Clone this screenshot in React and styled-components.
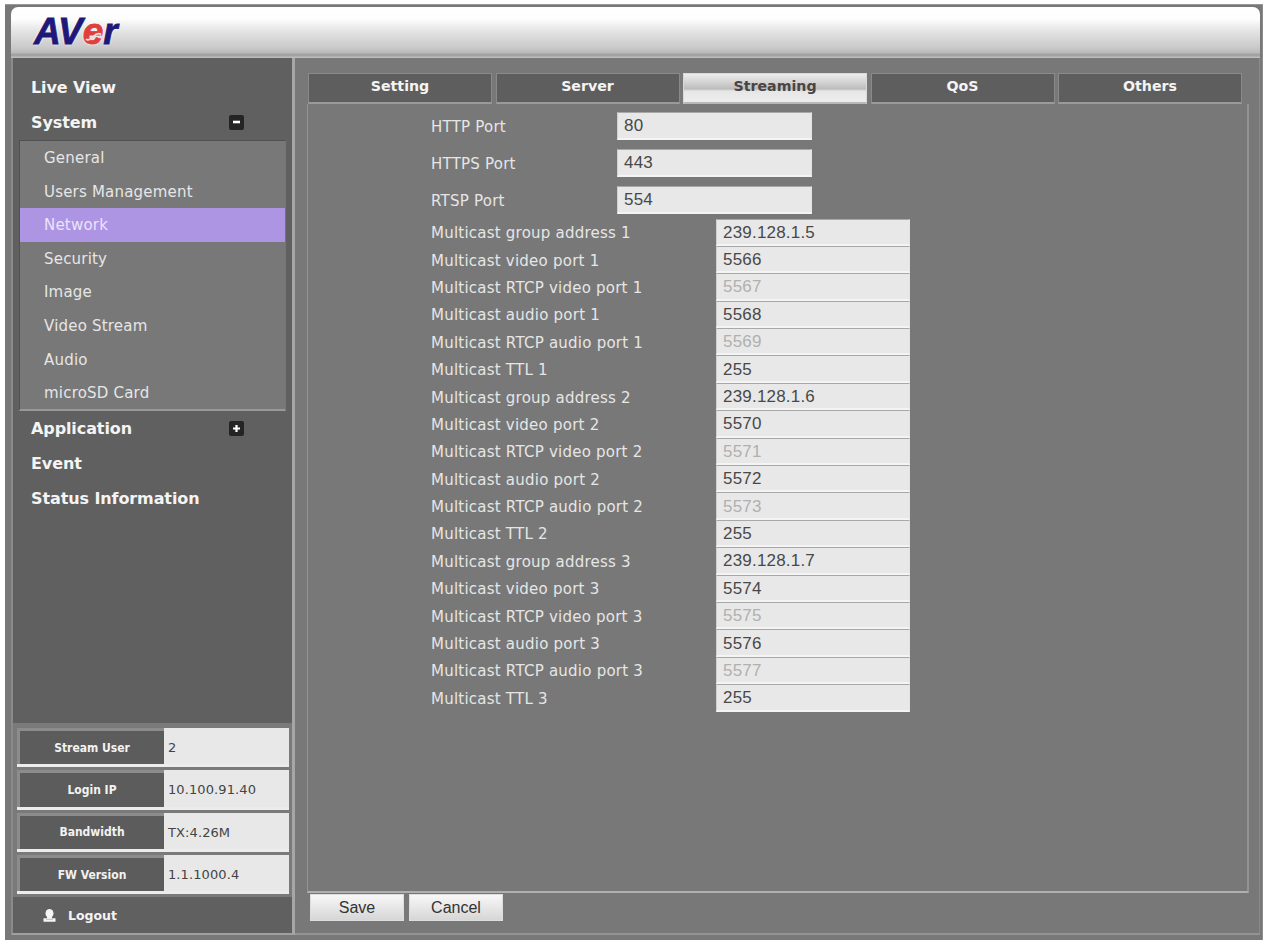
import React, { useState } from 'react';
import styled, { createGlobalStyle } from 'styled-components';

const tabs = ['Setting', 'Server', 'Streaming', 'QoS', 'Others'];

const systemItems = [
   'General',
   'Users Management',
   'Network',
   'Security',
   'Image',
   'Video Stream',
   'Audio',
   'microSD Card',
];

const ports = [
   { label: 'HTTP Port', value: '80' },
   { label: 'HTTPS Port', value: '443' },
   { label: 'RTSP Port', value: '554' },
];

const multicast = [
   { label: 'Multicast group address 1', value: '239.128.1.5' },
   { label: 'Multicast video port 1', value: '5566' },
   { label: 'Multicast RTCP video port 1', value: '5567', disabled: true },
   { label: 'Multicast audio port 1', value: '5568' },
   { label: 'Multicast RTCP audio port 1', value: '5569', disabled: true },
   { label: 'Multicast TTL 1', value: '255' },
   { label: 'Multicast group address 2', value: '239.128.1.6' },
   { label: 'Multicast video port 2', value: '5570' },
   { label: 'Multicast RTCP video port 2', value: '5571', disabled: true },
   { label: 'Multicast audio port 2', value: '5572' },
   { label: 'Multicast RTCP audio port 2', value: '5573', disabled: true },
   { label: 'Multicast TTL 2', value: '255' },
   { label: 'Multicast group address 3', value: '239.128.1.7' },
   { label: 'Multicast video port 3', value: '5574' },
   { label: 'Multicast RTCP video port 3', value: '5575', disabled: true },
   { label: 'Multicast audio port 3', value: '5576' },
   { label: 'Multicast RTCP audio port 3', value: '5577', disabled: true },
   { label: 'Multicast TTL 3', value: '255' },
];

const info = [
   { label: 'Stream User', value: '2' },
   { label: 'Login IP', value: '10.100.91.40' },
   { label: 'Bandwidth', value: 'TX:4.26M' },
   { label: 'FW Version', value: '1.1.1000.4' },
];

const Logo = () => (
   <LogoText>
      AV
      <em>
         e
         <Swoosh viewBox="0 0 22 22">
            <path d="M3 15c4 2 6-1 8-3s5-4 8-2" fill="none" stroke="#f7dcdc" strokeWidth="1.8" />
         </Swoosh>
      </em>
      r
   </LogoText>
);

const App = () => {
   const [tab, setTab] = useState('Streaming');
   const [page, setPage] = useState('Network');

   return (
      <>
         <GlobalStyle />
         <Frame>
            <Header>
               <Logo />
            </Header>
            <Main>
               <Sidebar>
                  <Nav>
                     <NavHeading>Live View</NavHeading>
                     <NavHeading>
                        System
                        <Toggle viewBox="0 0 15 15">
                           <rect width="15" height="15" rx="2" fill="#242424" />
                           <path d="M4 7h7" stroke="#fff" strokeWidth="2.6" />
                        </Toggle>
                     </NavHeading>
                     <SubMenu>
                        {systemItems.map((item) => (
                           <SubItem key={item} $active={item === page} onClick={() => setPage(item)}>
                              {item}
                           </SubItem>
                        ))}
                     </SubMenu>
                     <NavHeading>
                        Application
                        <Toggle viewBox="0 0 15 15">
                           <rect width="15" height="15" rx="2" fill="#242424" />
                           <path d="M4 7.5h7M7.5 4v7" stroke="#fff" strokeWidth="2.2" />
                        </Toggle>
                     </NavHeading>
                     <NavHeading>Event</NavHeading>
                     <NavHeading>Status Information</NavHeading>
                  </Nav>
                  <InfoList>
                     {info.map((row) => (
                        <InfoRow key={row.label}>
                           <InfoLabel>{row.label}</InfoLabel>
                           <InfoValue>{row.value}</InfoValue>
                        </InfoRow>
                     ))}
                  </InfoList>
                  <Logout>
                     <svg width="13" height="13" viewBox="0 0 13 13" fill="#f4f4f4">
                        <ellipse cx="6.5" cy="4.4" rx="4" ry="4.3" />
                        <path d="M4 7.5h5v1.8h3.5v3.5H.5V9.3H4z" />
                        <path d="M3 10.3h7" stroke="#aaa" strokeWidth=".7" />
                     </svg>
                     Logout
                  </Logout>
               </Sidebar>

               <Content>
                  <Tabs>
                     {tabs.map((name) => (
                        <Tab key={name} $active={name === tab} onClick={() => setTab(name)}>
                           {name}
                        </Tab>
                     ))}
                  </Tabs>
                  <Panel>
                     <PortList>
                        {ports.map((field) => (
                           <PortRow key={field.label}>
                              <FieldLabel>{field.label}</FieldLabel>
                              <Input defaultValue={field.value} />
                           </PortRow>
                        ))}
                     </PortList>
                     {multicast.map((field) => (
                        <MulticastRow key={field.label}>
                           <FieldLabel>{field.label}</FieldLabel>
                           <Input defaultValue={field.value} disabled={field.disabled} />
                        </MulticastRow>
                     ))}
                  </Panel>
                  <Actions>
                     <Button>Save</Button>
                     <Button>Cancel</Button>
                  </Actions>
               </Content>
            </Main>
         </Frame>
      </>
   );
};

const GlobalStyle = createGlobalStyle`
   * {
      box-sizing: border-box;
   }

   body {
      margin: 0;
      background: #fff;
      font-family: 'DejaVu Sans', Verdana, sans-serif;
      overflow: hidden;
   }
`;

const Frame = styled.div`
   display: flex;
   flex-direction: column;
   width: 1258px;
   height: 936px;
   margin: 4px 0 0 5px;
   padding: 3px 2px 0 6px;
   background: #787878;
   border-top: 1px solid #999;
   border-right: 1px solid #8c8c8c;
`;

const Header = styled.header`
   height: 51px;
   margin-top: -1px;
   padding: 11px 0 0 23px;
   background: linear-gradient(#fff 0, #fdfdfd 12px, #e2e2e2 25px, #cbcbcb 40px, #bababa 46px, #a2a2a2 47px, #a2a2a2 49px, #bcbcbc 50px);
   border-radius: 7px 7px 0 0;
`;

const LogoText = styled.div`
   display: flex;
   font: italic bold 37px/28px 'Liberation Sans', Arial, sans-serif;
   color: #201878;
   -webkit-text-stroke: 0.8px;
   text-shadow: 0 0 3px #fff, 0 0 2px #fff;

   em {
      position: relative;
      color: #e0403c;
   }
`;

const Swoosh = styled.svg`
   position: absolute;
   left: 0;
   top: 7px;
   width: 21px;
   height: 21px;
`;

const Main = styled.div`
   flex: 1;
   display: flex;
`;

const Sidebar = styled.aside`
   display: flex;
   flex-direction: column;
   width: 284px;
   height: 877px;
   border-left: 2px solid #8a8a8a;
   border-right: 3px solid #a6a6a6;
   border-bottom: 2px solid #a0a0a0;
   background: #606060;
`;

const Nav = styled.nav`
   height: 665px;
   padding-top: 12px;
`;

const NavHeading = styled.div`
   display: flex;
   align-items: center;
   justify-content: space-between;
   height: 35px;
   padding: 0 48px 0 18px;
   color: #f4f4f4;
   font-size: 16px;
   font-weight: bold;
   letter-spacing: -0.1px;
`;

const Toggle = styled.svg`
   width: 15px;
   height: 15px;
`;

const SubMenu = styled.div`
   height: 271px;
   margin: 0 6px 0 6px;
   background: #787878;
   border: 1px solid #505050;
   border-right-color: #757575;
   border-bottom: 2px solid #989898;
`;

const SubItem = styled.div`
   height: 33.6px;
   padding-left: 24px;
   color: ${({ $active }) => ($active ? '#ece2fb' : '#e6e6e6')};
   background: ${({ $active }) => ($active ? '#ae95e4' : 'transparent')};
   font-size: 15px;
   letter-spacing: 0.2px;
   line-height: 35px;
`;

const InfoList = styled.div`
   display: flex;
   flex-direction: column;
   gap: 3px;
   height: 174px;
   padding: 5px 3px 0 4px;
   background: #7a7a7a;
`;

const InfoRow = styled.div`
   display: grid;
   grid-template-columns: 147px 1fr;
   grid-template-rows: 36.3px;
   height: 39.3px;
   border-bottom: 3px solid #ececec;
   background: #e8e8e8;
`;

const InfoLabel = styled.div`
   display: flex;
   align-items: center;
   justify-content: center;
   border: solid #8c8c8c;
   border-width: 3px 0 0 3px;
   background: #5c5c5c;
   color: #f2f2f2;
   font-family: 'DejaVu Sans Condensed', 'DejaVu Sans', sans-serif;
   font-size: 12px;
   font-stretch: condensed;
   font-weight: bold;
`;

const InfoValue = styled.div`
   padding-left: 4px;
   color: #444;
   font-size: 13px;
   letter-spacing: 0.1px;
   line-height: 39px;
`;

const Logout = styled.div`
   display: flex;
   align-items: center;
   gap: 12px;
   height: 36px;
   padding-left: 30px;
   color: #f4f4f4;
   font-size: 12.5px;
   font-weight: bold;
`;

const Content = styled.section`
   flex: 1;
   display: flex;
   flex-direction: column;
   height: 877px;
   padding: 15px 10px 0 12px;
   border-right: 1px solid #8a8a8a;
   border-bottom: 2px solid #949494;
`;

const Tabs = styled.div`
   display: grid;
   grid-template-columns: repeat(5, 184px);
   column-gap: 3.5px;
   height: 31px;
   padding-left: 1px;
`;

const Tab = styled.div`
   height: 31px;
   border: 1px solid ${({ $active }) => ($active ? '#d8d8d8' : '#8a8a8a')};
   border-bottom: 2px solid ${({ $active }) => ($active ? '#b8b8b8' : '#9a9a9a')};
   background: ${({ $active }) =>
      $active ? 'linear-gradient(#ececec 0, #d4d4d4 8px, #bcbcbc 15px, #e6e6e6 17px, #ececec 26px)' : '#5e5e5e'};
   color: ${({ $active }) => ($active ? '#4a4444' : '#f4f4f4')};
   font-size: 14.2px;
   font-weight: bold;
   line-height: 25px;
   text-align: center;
`;

const Panel = styled.div`
   height: 789px;
   padding: 8px 0 0 123px;
   border: solid #939393;
   border-width: 0 2px 2px 1px;
   border-bottom-color: #b0b0b0;
`;

const PortList = styled.div`
   display: grid;
   gap: 9.5px;
   padding-bottom: 5px;
`;

const PortRow = styled.div`
   display: grid;
   grid-template-columns: 186px 195px;
   height: 27.5px;
   align-items: center;
`;

const MulticastRow = styled(PortRow)`
   grid-template-columns: 285px 194px;
   height: 27.4px;
`;

const FieldLabel = styled.label`
   padding-top: 2px;
   color: #e6e6e6;
   font-size: 15px;
   letter-spacing: 0.23px;
   white-space: nowrap;
`;

const Input = styled.input`
   width: 100%;
   height: 100%;
   padding: 2px 0 0 6px;
   border: solid;
   border-width: 1px 1px 2px 1px;
   border-color: #a8a8a8 #e4e4e4 #f4f4f4 #cfcfcf;
   border-radius: 0;
   background: #e8e8e8;
   color: ${({ disabled }) => (disabled ? '#b0b0b0' : '#484848')};
   font: 17px 'Liberation Sans', Arial, sans-serif;
   letter-spacing: 0.2px;
   outline: none;
`;

const Actions = styled.div`
   display: flex;
   gap: 5px;
   padding: 1px 0 0 3px;
`;

const Button = styled.button`
   width: 94px;
   height: 27px;
   padding: 0;
   border: 1px solid #ddd;
   background: linear-gradient(#f8f8f8, #d6d6d6);
   color: #333;
   font: 16px 'Liberation Sans', Arial, sans-serif;
`;

export default App;
